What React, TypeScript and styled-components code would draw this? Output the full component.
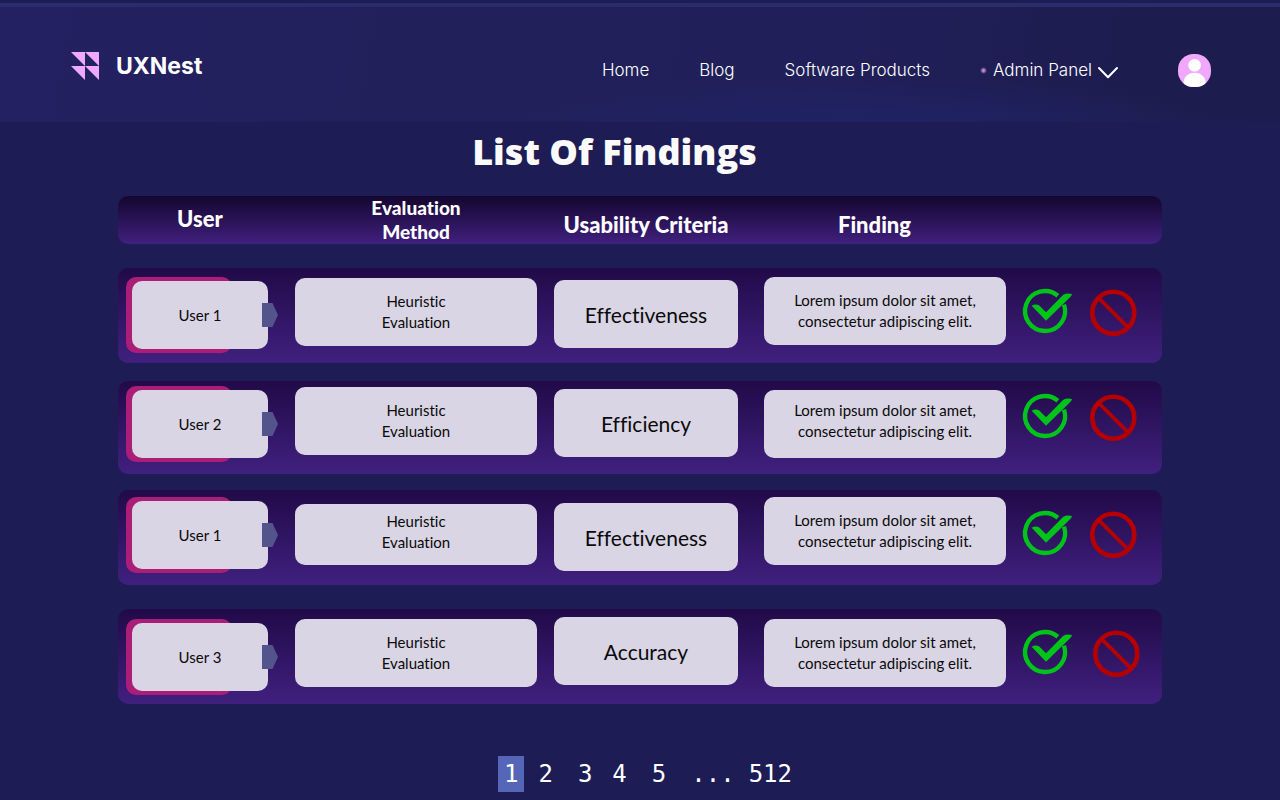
import React from "react";
import styled, { createGlobalStyle } from "styled-components";

const GlobalStyle = createGlobalStyle`
  *, *::before, *::after { box-sizing: border-box; }
  body {
    margin: 0;
    background: #1d1c55;
    color: #fff;
    font-family: Lato, "Liberation Sans", sans-serif;
    font-variant-ligatures: none;
  }
  ul, ol { list-style: none; margin: 0; padding: 0; }
  button { font: inherit; color: inherit; background: none; border: 0; padding: 0; cursor: pointer; }
  a { color: inherit; text-decoration: none; }
  svg { display: block; overflow: visible; }
`;

const Page = styled.div`
  display: flex;
  flex-direction: column;
  padding-top: 3px;
`;

const Header = styled.header`
  display: flex;
  align-items: center;
  justify-content: space-between;
  border-top: 4px solid #2a2d6c;
  padding: 45px 69px 34px 71px;
  background:
    radial-gradient(ellipse at 68% 110%, rgba(31, 37, 104, 0.9), rgba(31, 37, 104, 0) 32%),
    linear-gradient(100deg, #232161 0%, #21205a 35%, #201f59 65%, #1d1c4e 92%);
`;

const Brand = styled.a`
  display: flex;
  align-items: center;
  gap: 17px;
  margin-bottom: 8px;
  font: 700 23px/28px Inter, sans-serif;
`;

const Nav = styled.nav`
  display: flex;
  align-items: center;
  gap: 60px;
  font: 300 17px/24px Inter, sans-serif;
`;

const Links = styled.ul`
  display: flex;
  align-items: center;
  gap: 50px;
`;

const MenuButton = styled.button`
  display: flex;
  align-items: center;
  gap: 6px;
`;

const Dot = styled.span`
  width: 7px;
  height: 7px;
  border-radius: 50%;
  background: radial-gradient(circle, #c58fdc 15%, rgba(150, 105, 190, 0.5) 50%, transparent 72%);
`;

const Main = styled.main`
  padding: 0 118px;
`;

const Title = styled.h1`
  margin: 0;
  padding: 10px 51px 0 0;
  text-align: center;
  font: 800 36px/40px "Open Sans", sans-serif;
  color: #fafafa;
`;

const Table = styled.table`
  display: block;
  margin-top: 24px;
`;

const Head = styled.thead`
  display: block;
`;

const Body = styled.tbody`
  display: block;
`;

const columns = "177fr 259fr 210fr 259fr 139fr";

const HeadRow = styled.tr`
  display: grid;
  grid-template-columns: ${columns};
  height: 48px;
  border-radius: 10px;
  background: linear-gradient(#14062e, #40207f);
`;

const HeadCell = styled.th<{ $top: number; $left?: number; $right: number; $small?: boolean }>`
  padding: ${(p) => `${p.$top}px ${p.$right}px 0 ${p.$left ?? 0}px`};
  font-weight: 900;
  font-size: ${(p) => (p.$small ? 19 : 22)}px;
  line-height: ${(p) => (p.$small ? 24 : 25)}px;
  text-align: center;
`;

const Row = styled.tr<{ $gap: number; $height: number }>`
  display: grid;
  grid-template-columns: ${columns};
  margin-top: ${(p) => p.$gap}px;
  height: ${(p) => p.$height}px;
  border-radius: 10px;
  background: linear-gradient(#210a48, #40207f);
`;

const Cell = styled.td<{ $top: number; $right?: number }>`
  padding: ${(p) => `${p.$top}px ${p.$right ?? 17}px 0 0`};
  color: #0a0a0a;
`;

const Card = styled.div<{ $large?: boolean; $height?: number; $raised?: boolean }>`
  display: flex;
  align-items: center;
  justify-content: center;
  height: ${(p) => p.$height ?? 68}px;
  padding-bottom: ${(p) => (p.$raised ? 6 : 0)}px;
  border-radius: 10px;
  background: #d9d5e4;
  text-align: center;
  white-space: pre-line;
  font-size: ${(p) => (p.$large ? 21 : 15)}px;
  line-height: 21px;
`;

const UserTag = styled.div`
  position: relative;
  margin: 0 10px 0 8px;
  padding: 4px 0 4px 6px;

  &::before {
    content: "";
    position: absolute;
    inset: 0 36px 0 0;
    border-radius: 10px;
    background: #ab1e78;
  }

  ${Card} {
    position: relative;
  }
`;

const Pointer = styled.svg`
  position: absolute;
  right: -10px;
  top: 26px;
`;

const Actions = styled.div<{ $gap: number }>`
  display: flex;
  gap: ${(p) => p.$gap}px;
`;

const Pages = styled.ol`
  display: flex;
  justify-content: center;
  padding: 52px 0 8px 10px;
  font: 400 24px/36px "DejaVu Sans Mono", monospace;
`;

const PageItem = styled.li<{ $gap: number }>`
  margin-left: ${(p) => p.$gap}px;
`;

const PageLink = styled.a<{ $active?: boolean }>`
  display: block;
  padding: 0 ${(p) => (p.$active ? 6 : 0)}px;
  background: ${(p) => (p.$active ? "#5566b8" : "transparent")};
`;

const Logo = () => (
  <svg width="28" height="28" viewBox="0 0 28 28" fill="#f0a8fa" aria-hidden="true">
    <path d="M0 0H14V14ZM14 0H28V14ZM0 14H14V28ZM14 14H28V28Z" />
  </svg>
);

const Chevron = () => (
  <svg width="20" height="18" viewBox="0 0 20 18" fill="none" stroke="#fff" strokeWidth="2" strokeLinecap="round" strokeLinejoin="round" aria-hidden="true">
    <path d="M1 7L10 16.300L19 7" />
  </svg>
);

const Avatar = () => (
  <svg width="33" height="33" viewBox="0 0 33 33" aria-hidden="true">
    <clipPath id="avatar">
      <rect width="33" height="33" rx="15.500" />
    </clipPath>
    <g clipPath="url(#avatar)">
      <rect width="33" height="33" fill="#f0a8fa" />
      <circle cx="16.600" cy="11.300" r="6.300" fill="#fff" />
      <path d="M5.500 33V29.500C5.500 23 10 18.800 16.600 18.800S27.700 23 27.700 29.500V33Z" fill="#fff" />
    </g>
  </svg>
);

const CheckIcon = () => (
  <svg width="50" height="46" viewBox="0 0 50 46" aria-hidden="true">
    <path d="M34.900 5.700A20 20 0 1 0 41 14.600" fill="none" stroke="#00c41a" strokeWidth="4.400" />
    <path d="M8.700 15.800Q12.500 13.300 16.300 15.600L23 22.300L40 5Q43.500 2.800 49 4Q48.800 5.500 47.300 7L23 30.800Z" fill="#00c41a" />
  </svg>
);

const BanIcon = () => (
  <svg width="47" height="47" viewBox="0 0 47 47" fill="none" stroke="#b60000" aria-hidden="true">
    <circle cx="23.300" cy="23.700" r="21" strokeWidth="4.600" />
    <path d="M9 9.400L38 38.400" strokeWidth="3.800" />
  </svg>
);

const lorem = "Lorem ipsum dolor sit amet,\nconsectetur adipiscing elit.";

const findings = [
  { user: "User 1", criterion: "Effectiveness", gap: 24, height: 95, tops: [9, 10, 12, 9, 21], methodHeight: 68, raised: false, iconGap: 17 },
  { user: "User 2", criterion: "Efficiency", gap: 18, height: 93, tops: [5, 6, 8, 9, 13], methodHeight: 68, raised: true, iconGap: 17 },
  { user: "User 1", criterion: "Effectiveness", gap: 16, height: 95, tops: [7, 14, 13, 7, 21], methodHeight: 61, raised: false, iconGap: 17 },
  { user: "User 3", criterion: "Accuracy", gap: 24, height: 95, tops: [10, 10, 8, 10, 21], methodHeight: 68, raised: false, iconGap: 20 },
];

const pages = [
  { label: "1", gap: 0 },
  { label: "2", gap: 14 },
  { label: "3", gap: 25 },
  { label: "4", gap: 20 },
  { label: "5", gap: 25 },
  { label: "...", gap: 25 },
  { label: "512", gap: 14 },
];

export default function App() {
  return (
    <Page>
      <GlobalStyle />
      <Header>
        <Brand href="#">
          <Logo />
          UXNest
        </Brand>
        <Nav aria-label="Main">
          <Links>
            <li><a href="#home">Home</a></li>
            <li><a href="#blog">Blog</a></li>
            <li><a href="#products">Software Products</a></li>
            <li>
              <MenuButton type="button" aria-haspopup="menu">
                <Dot />
                Admin Panel
                <Chevron />
              </MenuButton>
            </li>
          </Links>
          <button type="button" aria-label="Account">
            <Avatar />
          </button>
        </Nav>
      </Header>
      <Main>
        <Title>List Of Findings</Title>
        <Table>
          <Head>
            <HeadRow>
              <HeadCell $top={10} $left={14} $right={27}>User</HeadCell>
              <HeadCell $top={0} $right={17} $small>Evaluation<br />Method</HeadCell>
              <HeadCell $top={16} $right={26}>Usability Criteria</HeadCell>
              <HeadCell $top={16} $right={38}>Finding</HeadCell>
              <HeadCell as="td" $top={0} $right={0} />
            </HeadRow>
          </Head>
          <Body>
            {findings.map((f, i) => (
              <Row key={i} $gap={f.gap} $height={f.height}>
                <Cell $top={f.tops[0]}>
                  <UserTag>
                    <Card>{f.user}</Card>
                    <Pointer width="16" height="24" viewBox="0 0 16 24" fill="#54548c" aria-hidden="true">
                      <path d="M0 0H10.500L16 12L10.500 24H0Z" />
                    </Pointer>
                  </UserTag>
                </Cell>
                <Cell $top={f.tops[1]}>
                  <Card $height={f.methodHeight} $raised={f.methodHeight < 68}>{"Heuristic\nEvaluation"}</Card>
                </Cell>
                <Cell $top={f.tops[2]} $right={26}>
                  <Card $large>{f.criterion}</Card>
                </Cell>
                <Cell $top={f.tops[3]}>
                  <Card $raised={f.raised}>{lorem}</Card>
                </Cell>
                <Cell $top={f.tops[4]} $right={0}>
                  <Actions $gap={f.iconGap}>
                    <button type="button" aria-label="Accept finding"><CheckIcon /></button>
                    <button type="button" aria-label="Reject finding"><BanIcon /></button>
                  </Actions>
                </Cell>
              </Row>
            ))}
          </Body>
        </Table>
        <nav aria-label="Pagination">
          <Pages>
            {pages.map((p, i) => (
              <PageItem key={p.label} $gap={p.gap}>
                {p.label === "..." ? (
                  <span>...</span>
                ) : (
                  <PageLink href={`#page-${p.label}`} $active={i === 0}>{p.label}</PageLink>
                )}
              </PageItem>
            ))}
          </Pages>
        </nav>
      </Main>
    </Page>
  );
}
